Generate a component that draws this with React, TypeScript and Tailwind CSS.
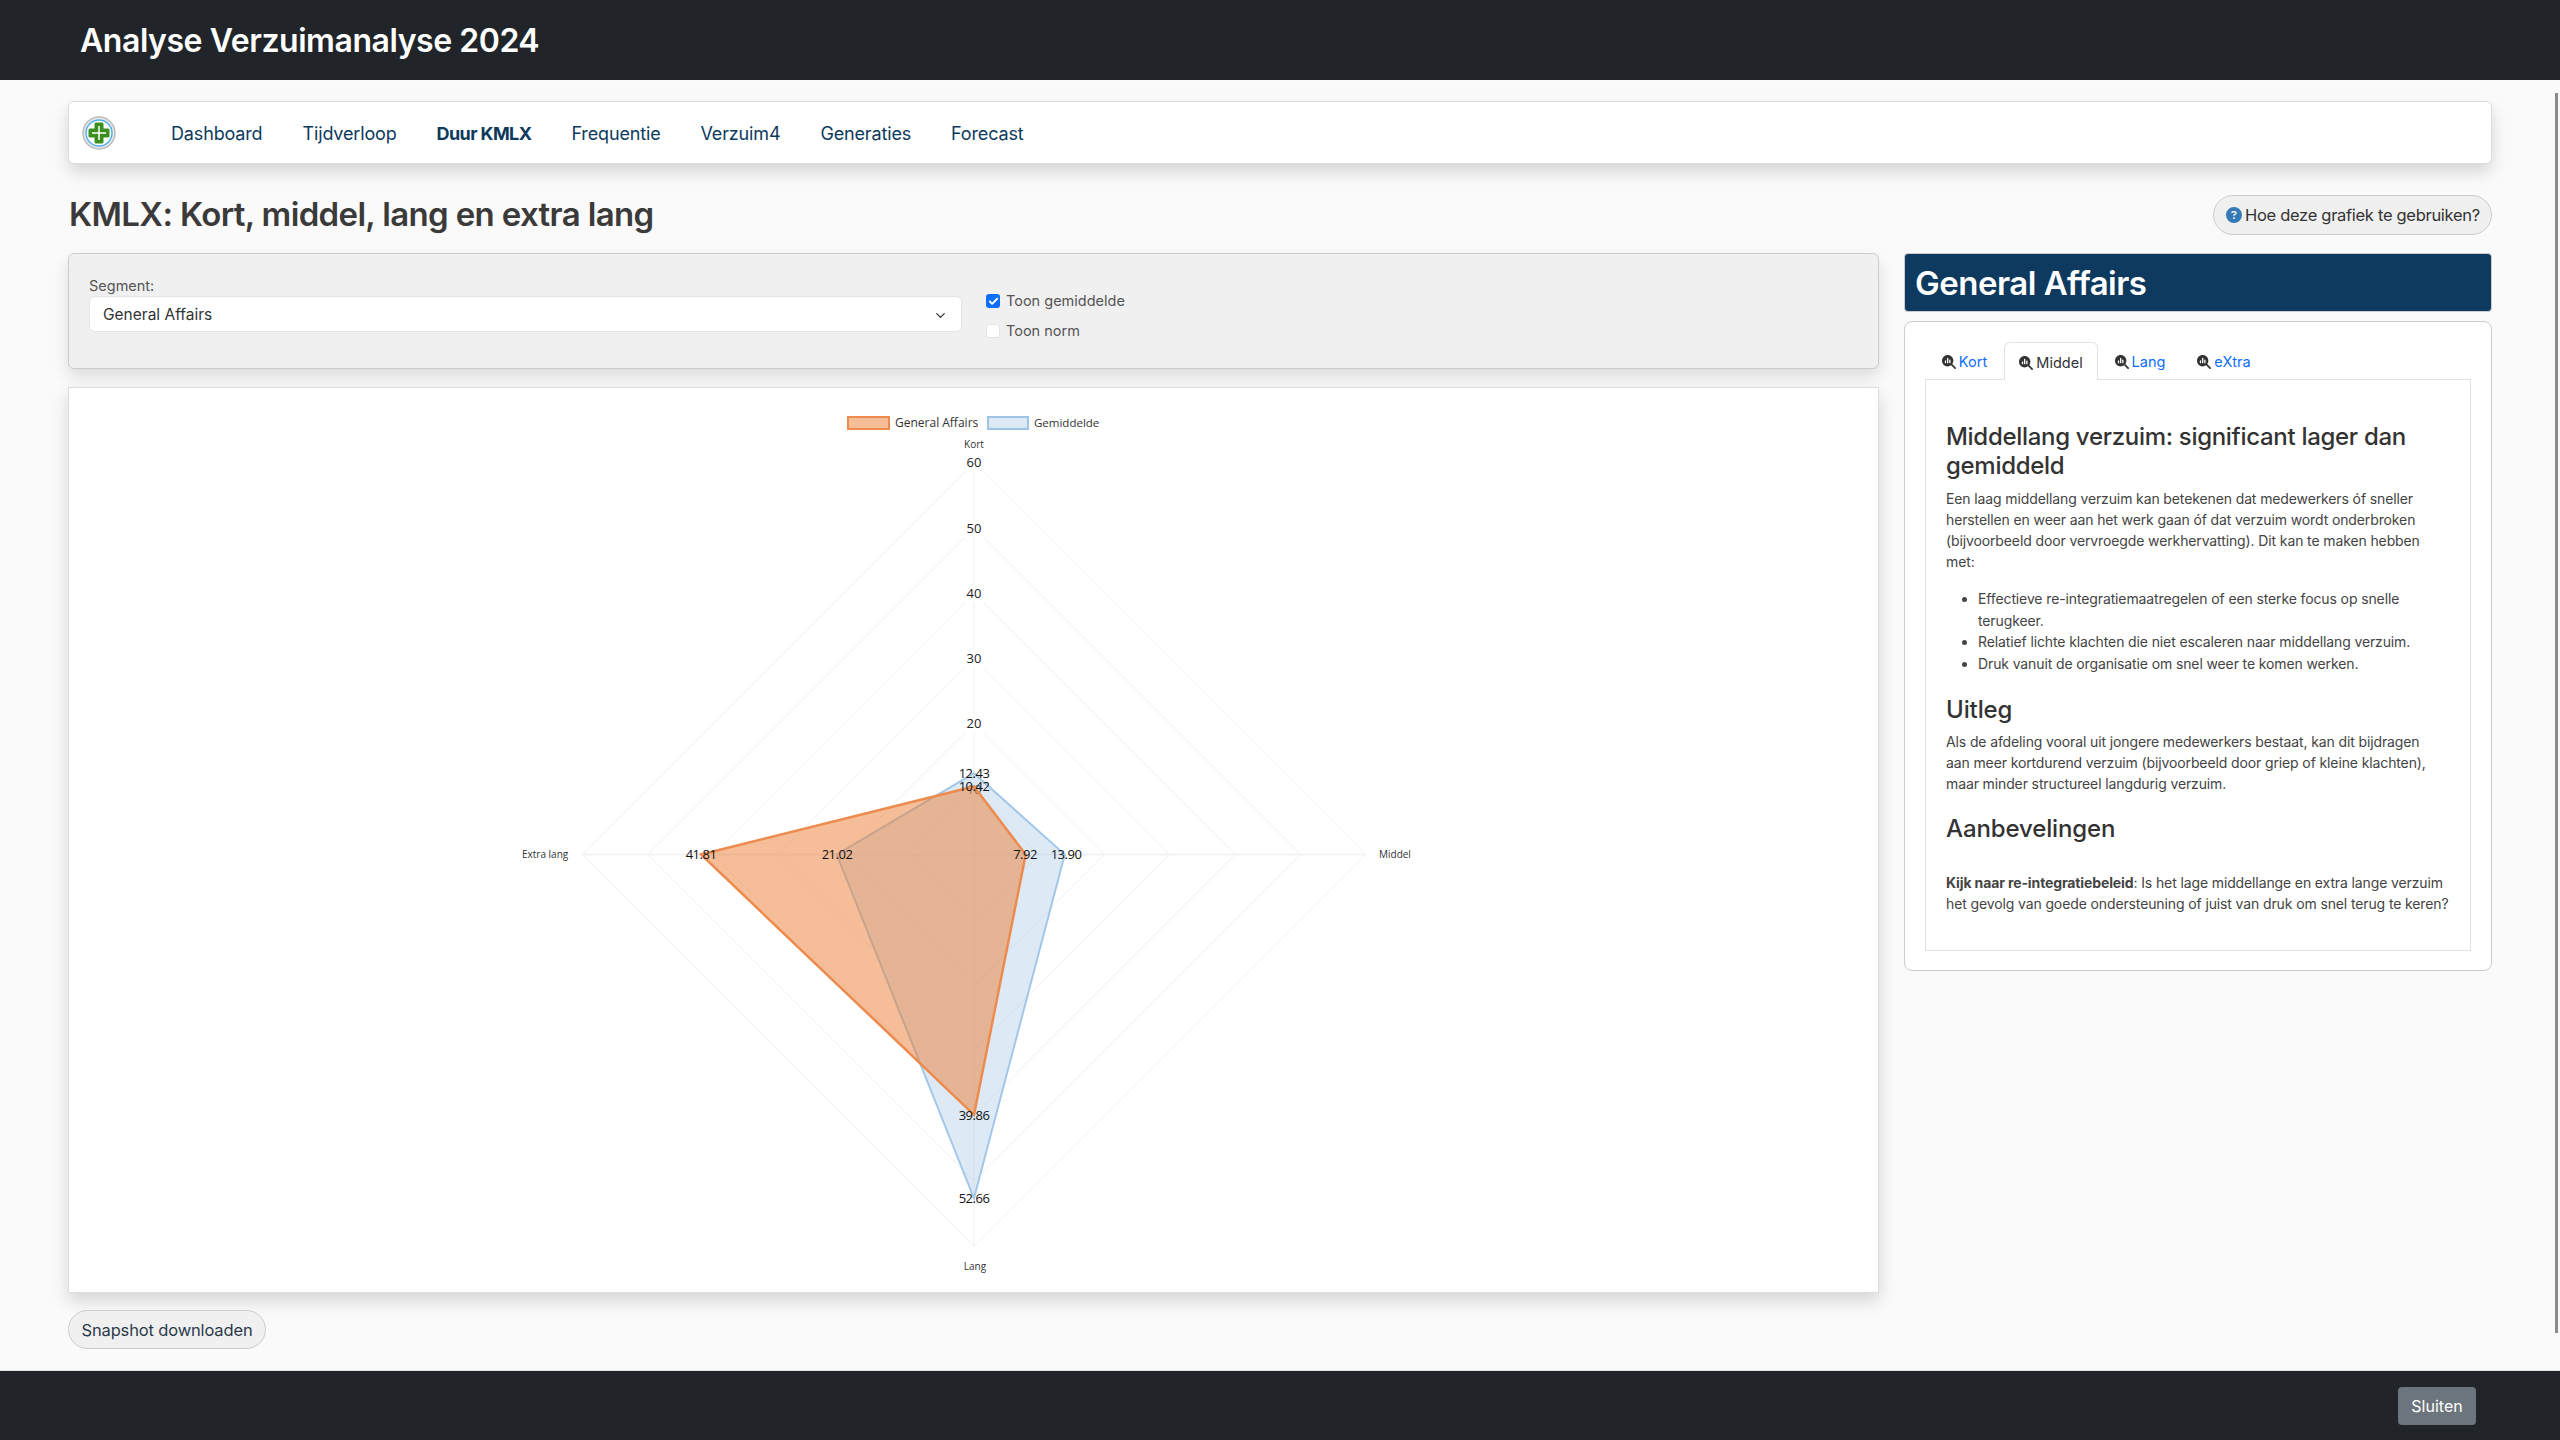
import { FaCircleQuestion, FaMagnifyingGlassChart } from 'react-icons/fa6';
import { ChevronDown, Check } from 'lucide-react';

const CX = 905;
const CY = 466.5;
const R = 391.8;

// value on the 0-60 scale -> [kort, middel, lang, extra] polygon
function poly(v: number[]) {
    const s = (n: number) => (n / 60) * R;
    return [
        [CX, CY - s(v[0])],
        [CX + s(v[1]), CY],
        [CX, CY + s(v[2])],
        [CX - s(v[3]), CY],
    ]
        .map((p) => p.join(','))
        .join(' ');
}

const navItems = ['Dashboard', 'Tijdverloop', 'Duur KMLX', 'Frequentie', 'Verzuim4', 'Generaties', 'Forecast'];
const ticks = [10, 20, 30, 40, 50, 60];
const chartFont = { fontFamily: '"Open Sans", sans-serif' };

function Logo() {
    return (
        <svg width="34" height="34" viewBox="0 0 34 34">
            <circle cx="17" cy="17" r="16" fill="#e8e8e8" stroke="#bdbdbd" strokeWidth="1.5" />
            <circle cx="17" cy="17" r="13" fill="#fff" stroke="#55b4e8" strokeWidth="1.5" />
            <path d="M14 6.5h6a1.5 1.5 0 0 1 1.5 1.5v4.5H26a1.5 1.5 0 0 1 1.5 1.5v6a1.5 1.5 0 0 1-1.5 1.5h-4.500V26a1.500 1.500 0 0 1-1.500 1.500h-6a1.500 1.500 0 0 1-1.500-1.500v-4.500H8a1.500 1.500 0 0 1-1.500-1.500v-6A1.500 1.500 0 0 1 8 12.500h4.500V8A1.500 1.500 0 0 1 14 6.500z" fill="#3a8f1e" />
            <path d="M17 10v14M10 17h14" stroke="#fff" strokeWidth="1.5" />
        </svg>
    );
}

function Radar() {
    const blue = poly([12.43, 13.9, 52.66, 21.02]);
    const orange = poly([10.42, 7.92, 39.86, 41.81]);
    return (
        <svg width="1809" height="904" className="block" style={chartFont}>
            {/* legend */}
            <rect x="779" y="29" width="41" height="12" fill="#f6be96" stroke="#ed8b4f" strokeWidth="2" />
            <text x="826" y="38.500" fontSize="12" fill="#333">General Affairs</text>
            <rect x="919" y="29" width="40" height="12" fill="#dde9f5" stroke="#9dc3e6" strokeWidth="2" />
            <text x="965" y="38.500" fontSize="11.500" fill="#333">Gemiddelde</text>

            {/* grid */}
            {ticks.map((t) => {
                const s = (t / 60) * R;
                return (
                    <polygon key={t} points={`${CX},${CY - s} ${CX + s},${CY} ${CX},${CY + s} ${CX - s},${CY}`} fill="none" stroke="#f0f0f0" strokeWidth="1" />
                );
            })}
            <line x1={CX} y1={CY - R} x2={CX} y2={CY + R} stroke="#f0f0f0" />
            <line x1={CX - R} y1={CY} x2={CX + R} y2={CY} stroke="#f3f3f3" strokeWidth="2" />
            {ticks.map((t) => {
                const y = CY - (t / 60) * R;
                return (
                    <g key={t}>
                        <rect x={CX - 11} y={y - 9} width="22" height="18" fill="#fff" />
                        <text x={CX} y={y + 4.500} fontSize="13" fill="#222" textAnchor="middle">{t}</text>
                    </g>
                );
            })}

            {/* data */}
            <polygon points={blue} fill="rgba(157,195,230,0.35)" stroke="#a3c7e8" strokeWidth="2" strokeLinejoin="miter" />
            <polygon points={orange} fill="rgba(237,125,49,0.5)" stroke="#ed8b4f" strokeWidth="2.500" strokeLinejoin="miter" />

            {/* axis labels */}
            <text x={CX} y="60" fontSize="10" fill="#333" textAnchor="middle">Kort</text>
            <text x={1310} y={CY + 3.500} fontSize="10" fill="#333">Middel</text>
            <text x={906} y="882" fontSize="10" fill="#333" textAnchor="middle">Lang</text>
            <text x={453} y={CY + 3.500} fontSize="10" fill="#333">Extra lang</text>

            {/* value labels */}
            <g fontSize="13" fill="#111" textAnchor="middle" letterSpacing="-0.5">
                <text x={CX} y="390">12.43</text>
                <text x={CX} y="403">10.42</text>
                <text x="956" y={CY + 4.500}>7.92</text>
                <text x="997" y={CY + 4.500}>13.90</text>
                <text x={CX} y="732">39.86</text>
                <text x={CX} y="815">52.66</text>
                <text x="632" y={CY + 4.500}>41.81</text>
                <text x="768" y={CY + 4.500}>21.02</text>
            </g>
        </svg>
    );
}

export default function App() {
    return (
        <div className="relative flex h-[1440px] flex-col bg-[#fafafa] font-['Inter',sans-serif] text-[#444]">
            {/* scrollbar thumb */}
            <div className="absolute right-[2px] top-[93px] h-[1240px] w-[3px] bg-[#8a8a8a]" />

            <header className="flex h-[80px] shrink-0 items-center bg-[#212529] pl-[80px] pt-[1px]">
                <h1 className="text-[32px] font-semibold tracking-[-0.45px] text-white">Analyse Verzuimanalyse 2024</h1>
            </header>

            <main className="flex-1 px-[68px] pt-[21px]">
                {/* nav */}
                <nav className="flex h-[63px] items-center rounded-md border border-[#ddd] bg-white pl-[13px] shadow-[0_8px_16px_rgba(0,0,0,0.15)]">
                    <Logo />
                    <ul className="ml-[55px] flex gap-[40px] pt-[2px] text-[18px] tracking-[-0.15px] text-[#0d3a5c]">
                        {navItems.map((item) => (
                            <li key={item} className={item === 'Duur KMLX' ? 'font-bold tracking-[-0.6px]' : ''}>{item}</li>
                        ))}
                    </ul>
                </nav>

                {/* title row */}
                <div className="mt-[31px] flex h-[40px] items-center justify-between">
                    <h2 className="pl-[1px] text-[33px] font-semibold tracking-[-0.65px] text-[#3a3a3a]">KMLX: Kort, middel, lang en extra lang</h2>
                    <button type="button" className="flex h-[40px] w-[279px] items-center gap-[3px] rounded-full border border-[#ccc] bg-[#f0f0f0] pl-[12px] text-[16.500px] tracking-[-0.3px] text-[#333]">
                        <FaCircleQuestion className="text-[#337ab7]" size={16} />
                        Hoe deze grafiek te gebruiken?
                    </button>
                </div>

                <div className="mt-[18px] flex gap-[25px]">
                    {/* left column */}
                    <div className="w-[1811px] shrink-0">
                        <div className="flex h-[116px] rounded-md border border-[#ccc] bg-[#f0f0f0] pl-[20px] pt-[23px] shadow-[0_8px_16px_rgba(0,0,0,0.12)]">
                            <div className="w-[873px]">
                                <label className="block text-[14.500px] leading-[18px] text-[#555]">Segment:</label>
                                <div className="mt-[1px] flex h-[36px] items-center justify-between rounded-md border border-[#e5e5e5] bg-white pl-[13px] pr-[13px] pt-[2px] text-[15.500px] text-[#333]">
                                    General Affairs
                                    <ChevronDown size={15} strokeWidth={2} />
                                </div>
                            </div>
                            <div className="ml-[24px] mt-[17px] flex flex-col gap-[16px] text-[14.500px] leading-[14px] text-[#555]">
                                <div className="flex items-center gap-[6px]">
                                    <span className="flex h-[14px] w-[14px] items-center justify-center rounded-[3px] bg-[#0d6efd]">
                                        <Check size={11} strokeWidth={4} color="#fff" />
                                    </span>
                                    Toon gemiddelde
                                </div>
                                <div className="flex items-center gap-[6px]">
                                    <span className="h-[14px] w-[14px] rounded-[3px] border border-[#e5e5e5] bg-white" />
                                    Toon norm
                                </div>
                            </div>
                        </div>

                        <div className="mt-[18px] h-[906px] border border-[#ddd] bg-white shadow-[0_8px_16px_rgba(0,0,0,0.15)]">
                            <Radar />
                        </div>

                        <button type="button" className="mt-[17px] flex h-[39px] w-[198px] items-center justify-center rounded-full border border-[#ccc] bg-[#f0f0f0] pt-[1px] text-[16.500px] tracking-[-0.15px] text-[#2b3a4a]">
                            Snapshot downloaden
                        </button>
                    </div>

                    {/* right column */}
                    <div className="w-[588px] shrink-0">
                        <div className="flex h-[59px] items-center rounded border border-[#ccc] bg-[#0d3a5e] pl-[10px] pt-[2px] text-[33px] font-semibold tracking-[-0.5px] text-white">
                            General Affairs
                        </div>
                        <div className="mt-[9px] h-[650px] rounded-lg border border-[#ccc] bg-white px-[20px] pt-[20px]">
                            <div className="flex h-[38px] border-b border-[#dee2e6] text-[14.500px] text-[#0d6efd]">
                                <div className="flex w-[79px] items-center justify-center gap-[3px] pt-[3px]"><FaMagnifyingGlassChart className="text-[#333]" size={14} />Kort</div>
                                <div className="-mb-px flex w-[94px] items-center justify-center gap-[3px] rounded-t-md border border-b-0 border-[#dee2e6] bg-white pt-[3px] text-[#333]"><FaMagnifyingGlassChart size={14} />Middel</div>
                                <div className="flex w-[84px] items-center justify-center gap-[3px] pt-[3px]"><FaMagnifyingGlassChart className="text-[#333]" size={14} />Lang</div>
                                <div className="flex w-[84px] items-center justify-center gap-[3px] pt-[3px]"><FaMagnifyingGlassChart className="text-[#333]" size={14} />eXtra</div>
                            </div>
                            <div className="h-[571px] border border-t-0 border-[#dee2e6] px-[20px] pt-[42px] text-[14px] leading-[21px] tracking-[-0.12px]">
                                <h4 className="text-[24px] font-medium leading-[29px] tracking-[-0.3px] text-[#333]">Middellang verzuim: significant lager dan gemiddeld</h4>
                                <p className="mt-[8px]">Een laag middellang verzuim kan betekenen dat medewerkers óf sneller herstellen en weer aan het werk gaan óf dat verzuim wordt onderbroken (bijvoorbeeld door vervroegde werkhervatting). Dit kan te maken hebben<br />met:</p>
                                <ul className="mt-[16px] list-disc pl-[32px] leading-[21.500px]">
                                    <li>Effectieve re-integratiemaatregelen of een sterke focus op snelle terugkeer.</li>
                                    <li>Relatief lichte klachten die niet escaleren naar middellang verzuim.</li>
                                    <li>Druk vanuit de organisatie om snel weer te komen werken.</li>
                                </ul>
                                <h4 className="mt-[21px] text-[24px] font-medium leading-[29px] text-[#333]">Uitleg</h4>
                                <p className="mt-[7px]">Als de afdeling vooral uit jongere medewerkers bestaat, kan dit bijdragen<br />aan meer kortdurend verzuim (bijvoorbeeld door griep of kleine klachten), maar minder structureel langdurig verzuim.</p>
                                <h4 className="mt-[20px] text-[24px] font-medium leading-[29px] text-[#333]">Aanbevelingen</h4>
                                <p className="mt-[29px]"><strong className="font-bold">Kijk naar re-integratiebeleid</strong>: Is het lage middellange en extra lange verzuim het gevolg van goede ondersteuning of juist van druk om snel terug te keren?</p>
                            </div>
                        </div>
                    </div>
                </div>
            </main>

            <footer className="flex h-[70px] shrink-0 items-center justify-end border-t border-[#dee2e6] bg-[#212529] pr-[84px]">
                <button type="button" className="h-[38px] w-[78px] rounded bg-[#6c757d] text-[16px] text-white">Sluiten</button>
            </footer>
        </div>
    );
}
